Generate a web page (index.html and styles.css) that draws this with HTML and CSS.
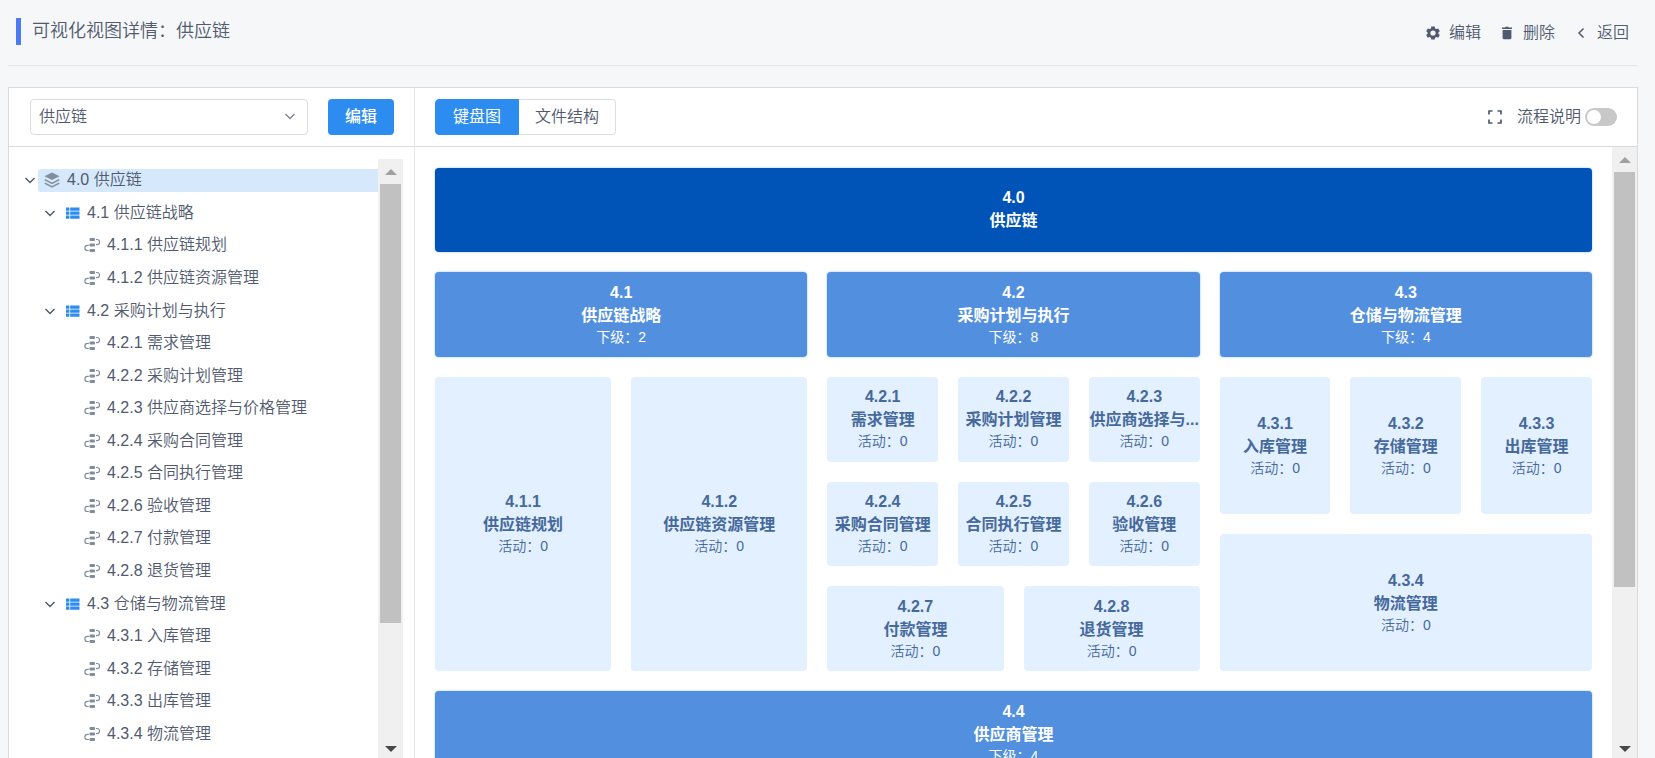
FILE: index.html
```html
<!DOCTYPE html>
<html lang="zh-CN">
<head>
<meta charset="utf-8">
<title>可视化视图详情</title>
<link rel="stylesheet" href="styles.css">
</head>
<body>
<svg class="sprite" aria-hidden="true">
  <symbol id="i-chevron" viewBox="0 0 16 16"><path d="M3.500 6l4.500 4.500L12.500 6" fill="none" stroke="currentColor" stroke-width="1.500"/></symbol>
  <symbol id="i-back" viewBox="0 0 16 16"><path d="M10.500 3.500L6 8l4.500 4.500" fill="none" stroke="currentColor" stroke-width="1.500"/></symbol>
  <symbol id="i-gear" viewBox="0 0 16 16"><path fill="currentColor" fill-rule="evenodd" d="M6.300 1.500h3.400l.4 1.900 1.300.7 1.800-.7 1.600 2.800-1.400 1.200v1.300l1.400 1.200-1.600 2.800-1.800-.7-1.300.7-.4 1.800H6.300l-.4-1.800-1.300-.7-1.800.7-1.600-2.800 1.400-1.200V7.400L1.200 6.200l1.600-2.800 1.800.7 1.300-.7zM8 5.400a2.600 2.600 0 1 0 0 5.200a2.600 2.600 0 0 0 0-5.200z"/></symbol>
  <symbol id="i-trash" viewBox="0 0 16 16"><path fill="currentColor" d="M3 2.500h3L6.700 1.800h2.600L10 2.500h3V4H3zM3.600 5h8.800v8c0 .7-.5 1.200-1.200 1.200H4.800c-.7 0-1.200-.5-1.200-1.200z"/></symbol>
  <symbol id="i-layers" viewBox="0 0 16 16"><path fill="currentColor" d="M8 .5l7.500 3.800L8 8.100.5 4.300z"/><path d="M.8 7.700L8 11.300l7.200-3.600M.8 11.200L8 14.800l7.200-3.600" fill="none" stroke="currentColor" stroke-width="1.500"/></symbol>
  <symbol id="i-list" viewBox="0 0 16 16"><path fill="currentColor" d="M2 2.500h3.400v3.300H2zM6.200 2.500h9.300v3.300H6.200zM2 6.500h3.400v3.300H2zM6.200 6.500h9.300v3.300H6.200zM2 10.500h3.400v3.300H2zM6.200 10.500h9.300v3.300H6.200z"/></symbol>
  <symbol id="i-flow" viewBox="0 0 16 16"><rect x="5.500" y="1" width="5.500" height="3" rx="1" fill="currentColor"/><rect x="5.500" y="6.500" width="5.500" height="3" rx="1" fill="currentColor"/><rect x="5.500" y="12" width="5.500" height="3" rx="1" fill="currentColor"/><path d="M12 2.500h1a2.500 2.500 0 0 1 0 5.200h-1M4.800 8.300H3.500a2.600 2.600 0 0 0 0 5.200h1.300" fill="none" stroke="currentColor" stroke-width="1.200"/></symbol>
  <symbol id="i-full" viewBox="0 0 16 16"><path d="M2 5.500V2h3.500M10.500 2H14v3.500M14 10.500V14h-3.500M5.500 14H2v-3.500" fill="none" stroke="currentColor" stroke-width="1.700"/></symbol>
</svg>

<header class="page-head">
  <h1 class="page-title">可视化视图详情：供应链</h1>
  <nav class="actions">
    <button class="action"><svg class="icon"><use href="#i-gear"/></svg>编辑</button>
    <button class="action"><svg class="icon"><use href="#i-trash"/></svg>删除</button>
    <button class="action"><svg class="icon"><use href="#i-back"/></svg>返回</button>
  </nav>
</header>

<main class="panel">
  <aside class="side">
    <div class="toolbar">
      <div class="select-wrap">
        <select class="select" aria-label="供应链"><option>供应链</option></select>
        <svg class="icon select-arrow"><use href="#i-chevron"/></svg>
      </div>
      <button class="btn-primary">编辑</button>
    </div>
    <div class="tree-area">
      <ul class="tree">
        <li class="node"><svg class="icon toggle"><use href="#i-chevron"/></svg><span class="label selected"><svg class="icon gray"><use href="#i-layers"/></svg>4.0 供应链</span></li>
        <li class="node level-1"><svg class="icon toggle"><use href="#i-chevron"/></svg><span class="label"><svg class="icon blue"><use href="#i-list"/></svg>4.1 供应链战略</span></li>
        <li class="node level-2"><span class="label"><svg class="icon gray"><use href="#i-flow"/></svg>4.1.1 供应链规划</span></li>
        <li class="node level-2"><span class="label"><svg class="icon gray"><use href="#i-flow"/></svg>4.1.2 供应链资源管理</span></li>
        <li class="node level-1"><svg class="icon toggle"><use href="#i-chevron"/></svg><span class="label"><svg class="icon blue"><use href="#i-list"/></svg>4.2 采购计划与执行</span></li>
        <li class="node level-2"><span class="label"><svg class="icon gray"><use href="#i-flow"/></svg>4.2.1 需求管理</span></li>
        <li class="node level-2"><span class="label"><svg class="icon gray"><use href="#i-flow"/></svg>4.2.2 采购计划管理</span></li>
        <li class="node level-2"><span class="label"><svg class="icon gray"><use href="#i-flow"/></svg>4.2.3 供应商选择与价格管理</span></li>
        <li class="node level-2"><span class="label"><svg class="icon gray"><use href="#i-flow"/></svg>4.2.4 采购合同管理</span></li>
        <li class="node level-2"><span class="label"><svg class="icon gray"><use href="#i-flow"/></svg>4.2.5 合同执行管理</span></li>
        <li class="node level-2"><span class="label"><svg class="icon gray"><use href="#i-flow"/></svg>4.2.6 验收管理</span></li>
        <li class="node level-2"><span class="label"><svg class="icon gray"><use href="#i-flow"/></svg>4.2.7 付款管理</span></li>
        <li class="node level-2"><span class="label"><svg class="icon gray"><use href="#i-flow"/></svg>4.2.8 退货管理</span></li>
        <li class="node level-1"><svg class="icon toggle"><use href="#i-chevron"/></svg><span class="label"><svg class="icon blue"><use href="#i-list"/></svg>4.3 仓储与物流管理</span></li>
        <li class="node level-2"><span class="label"><svg class="icon gray"><use href="#i-flow"/></svg>4.3.1 入库管理</span></li>
        <li class="node level-2"><span class="label"><svg class="icon gray"><use href="#i-flow"/></svg>4.3.2 存储管理</span></li>
        <li class="node level-2"><span class="label"><svg class="icon gray"><use href="#i-flow"/></svg>4.3.3 出库管理</span></li>
        <li class="node level-2"><span class="label"><svg class="icon gray"><use href="#i-flow"/></svg>4.3.4 物流管理</span></li>
      </ul>
      <div class="scrollbar"><span class="arrow-up"></span><div class="track"><div class="thumb thumb-tree"></div></div><span class="arrow-down"></span></div>
    </div>
  </aside>

  <section class="content">
    <div class="toolbar">
      <div class="tabs">
        <button class="tab active">键盘图</button>
        <button class="tab">文件结构</button>
      </div>
      <div class="tools">
        <svg class="icon"><use href="#i-full"/></svg>
        <label class="switch-label">流程说明<input class="switch" type="checkbox" role="switch"></label>
      </div>
    </div>
    <div class="board-area">
      <div class="board">
        <div class="tile root"><strong>4.0</strong><strong>供应链</strong></div>
        <div class="columns">
          <div class="tile group"><strong>4.1</strong><strong>供应链战略</strong><span>下级：2</span></div>
          <div class="tile group"><strong>4.2</strong><strong>采购计划与执行</strong><span>下级：8</span></div>
          <div class="tile group"><strong>4.3</strong><strong>仓储与物流管理</strong><span>下级：4</span></div>
        </div>
        <div class="columns details">
          <div class="stack">
            <div class="line">
              <div class="tile"><strong>4.1.1</strong><strong>供应链规划</strong><span>活动：0</span></div>
              <div class="tile"><strong>4.1.2</strong><strong>供应链资源管理</strong><span>活动：0</span></div>
            </div>
          </div>
          <div class="stack">
            <div class="line">
              <div class="tile"><strong>4.2.1</strong><strong>需求管理</strong><span>活动：0</span></div>
              <div class="tile"><strong>4.2.2</strong><strong>采购计划管理</strong><span>活动：0</span></div>
              <div class="tile"><strong>4.2.3</strong><strong>供应商选择与...</strong><span>活动：0</span></div>
            </div>
            <div class="line">
              <div class="tile"><strong>4.2.4</strong><strong>采购合同管理</strong><span>活动：0</span></div>
              <div class="tile"><strong>4.2.5</strong><strong>合同执行管理</strong><span>活动：0</span></div>
              <div class="tile"><strong>4.2.6</strong><strong>验收管理</strong><span>活动：0</span></div>
            </div>
            <div class="line">
              <div class="tile"><strong>4.2.7</strong><strong>付款管理</strong><span>活动：0</span></div>
              <div class="tile"><strong>4.2.8</strong><strong>退货管理</strong><span>活动：0</span></div>
            </div>
          </div>
          <div class="stack">
            <div class="line">
              <div class="tile"><strong>4.3.1</strong><strong>入库管理</strong><span>活动：0</span></div>
              <div class="tile"><strong>4.3.2</strong><strong>存储管理</strong><span>活动：0</span></div>
              <div class="tile"><strong>4.3.3</strong><strong>出库管理</strong><span>活动：0</span></div>
            </div>
            <div class="line">
              <div class="tile"><strong>4.3.4</strong><strong>物流管理</strong><span>活动：0</span></div>
            </div>
          </div>
        </div>
        <div class="tile group"><strong>4.4</strong><strong>供应商管理</strong><span>下级：4</span></div>
      </div>
      <div class="scrollbar"><span class="arrow-up"></span><div class="track"><div class="thumb thumb-board"></div></div><span class="arrow-down"></span></div>
    </div>
  </section>
</main>
</body>
</html>
```
FILE: styles.css
```css
* { box-sizing: border-box; }
body {
  margin: 0;
  height: 100vh;
  padding: 0 17px 0 8px;
  display: flex;
  flex-direction: column;
  overflow: hidden;
  background: #f5f7f9;
  color: #515a6e;
  font: 16px/24px "Liberation Sans", "Noto Sans CJK SC", sans-serif;
  font-weight: 350;
}
button, select { font: inherit; color: inherit; }
.sprite { display: none; }
.icon { width: 16px; height: 16px; flex: none; }

.page-head {
  flex: none;
  display: flex;
  align-items: center;
  justify-content: space-between;
  height: 66px;
  margin-bottom: 21px;
  padding: 0 9px 0 8px;
  border-bottom: 1px solid #e3e6ea;
}
.page-title {
  margin: 0 0 2px;
  padding-left: 11px;
  border-left: 5px solid #4a7cf0;
  font-size: 18px;
  line-height: 27px;
  font-weight: 350;
}
.actions { display: flex; gap: 18px; }
.action {
  display: flex;
  align-items: center;
  gap: 8px;
  padding: 0;
  border: 0;
  background: none;
}

.panel {
  flex: 1;
  min-height: 0;
  display: flex;
  border: 1px solid #d7dade;
  border-bottom: 0;
  background: #fff;
}
.side {
  flex: none;
  width: 406px;
  display: flex;
  flex-direction: column;
  border-right: 1px solid #e3e5e9;
}
.content { flex: 1; min-width: 0; display: flex; flex-direction: column; }
.toolbar {
  flex: none;
  height: 59px;
  display: flex;
  align-items: center;
  justify-content: space-between;
  gap: 20px;
  padding: 0 20px;
  border-bottom: 1px solid #d7dade;
}
.side .toolbar { padding-left: 21px; }
.select-wrap { position: relative; flex: 1; }
.select {
  display: block;
  appearance: none;
  width: 100%;
  height: 36px;
  padding: 0 32px 0 8px;
  border: 1px solid #dcdee2;
  border-radius: 4px;
  background: #fff;
}
.select-arrow { position: absolute; right: 10px; top: 9px; color: #808695; }
.btn-primary {
  height: 36px;
  padding: 0 17px;
  border: 0;
  border-radius: 4px;
  background: #2d8cf0;
  color: #fff;
  font-weight: 500;
}
.tabs { display: flex; }
.tab {
  height: 36px;
  padding: 0 16px;
  border: 1px solid #dcdee2;
  border-left: 0;
  border-radius: 0 4px 4px 0;
  background: #fff;
}
.tab.active {
  padding: 0 17px;
  border: 1px solid #2d8cf0;
  border-radius: 4px 0 0 4px;
  background: #2d8cf0;
  color: #fff;
  font-weight: 400;
}
.tools { display: flex; align-items: center; gap: 14px; }
.switch-label { display: flex; align-items: center; gap: 4px; }
.switch {
  appearance: none;
  width: 32px;
  height: 18px;
  margin: 0;
  border-radius: 9px;
  background: #c8c8c8;
}
.switch::before {
  content: "";
  display: block;
  width: 14px;
  height: 14px;
  margin: 2px;
  border-radius: 50%;
  background: #fff;
}

.tree-area { flex: 1; min-height: 0; display: flex; padding: 12px 11px 0 13px; }
.tree {
  flex: 1;
  display: flex;
  flex-direction: column;
  list-style: none;
  margin: 0;
  padding: 5px 0 8px;
}
.node { flex: 1; display: flex; align-items: center; }
.level-1 { padding-left: 20px; }
.level-2 { padding-left: 56px; }
.toggle { color: #515a6e; }
.label {
  flex: 1;
  display: flex;
  align-items: center;
  gap: 7px;
  height: 23px;
  padding-left: 6px;
  border-radius: 3px 0 0 3px;
  white-space: nowrap;
}
.selected { background: #d5e8fc; }
.gray { color: #808d9c; }
.blue { color: #2d8cf0; }

.scrollbar {
  flex: none;
  width: 25px;
  padding: 0 2px;
  display: flex;
  flex-direction: column;
  background: #f0f0f0;
}
.arrow-up, .arrow-down { flex: none; display: grid; place-items: center; }
.arrow-up { height: 25px; }
.arrow-down { height: 18px; }
.arrow-up::before, .arrow-down::before { content: ""; border: 6px solid transparent; }
.arrow-up::before { border-top: 0; border-bottom-color: #a0a0a0; }
.arrow-down::before { border-bottom: 0; border-top-color: #484848; }
.track { flex: 1; }
.thumb { background: #c1c1c1; }
.thumb-tree { height: 79%; }
.thumb-board { height: 73%; }

.board-area { flex: 1; min-height: 0; display: flex; overflow: hidden; }
.board {
  flex: 1;
  min-width: 0;
  display: flex;
  flex-direction: column;
  gap: 20px;
  padding: 21px 20px 0;
}
.columns { flex: none; display: grid; grid-template-columns: repeat(3, minmax(0, 1fr)); gap: 20px; }
.details { min-height: 294px; }
.stack { display: flex; flex-direction: column; gap: 20px; }
.line { flex: 1; display: flex; gap: 20px; }
.tile {
  flex: 1;
  min-width: 0;
  display: flex;
  flex-direction: column;
  align-items: center;
  justify-content: center;
  padding-bottom: 2px;
  border-radius: 4px;
  background: #e3f0ff;
  color: #46699c;
  white-space: nowrap;
  overflow: hidden;
}
.tile strong { line-height: 23px; font-weight: 700; }
.tile span { font-size: 14px; line-height: 20px; }
.root, .group { flex: none; color: #fff; box-shadow: 0 0 2px #7db8f5; }
.root { height: 84px; background: #0054b8; }
.group { height: 85px; background: #5290df; font-weight: 400; }
```
